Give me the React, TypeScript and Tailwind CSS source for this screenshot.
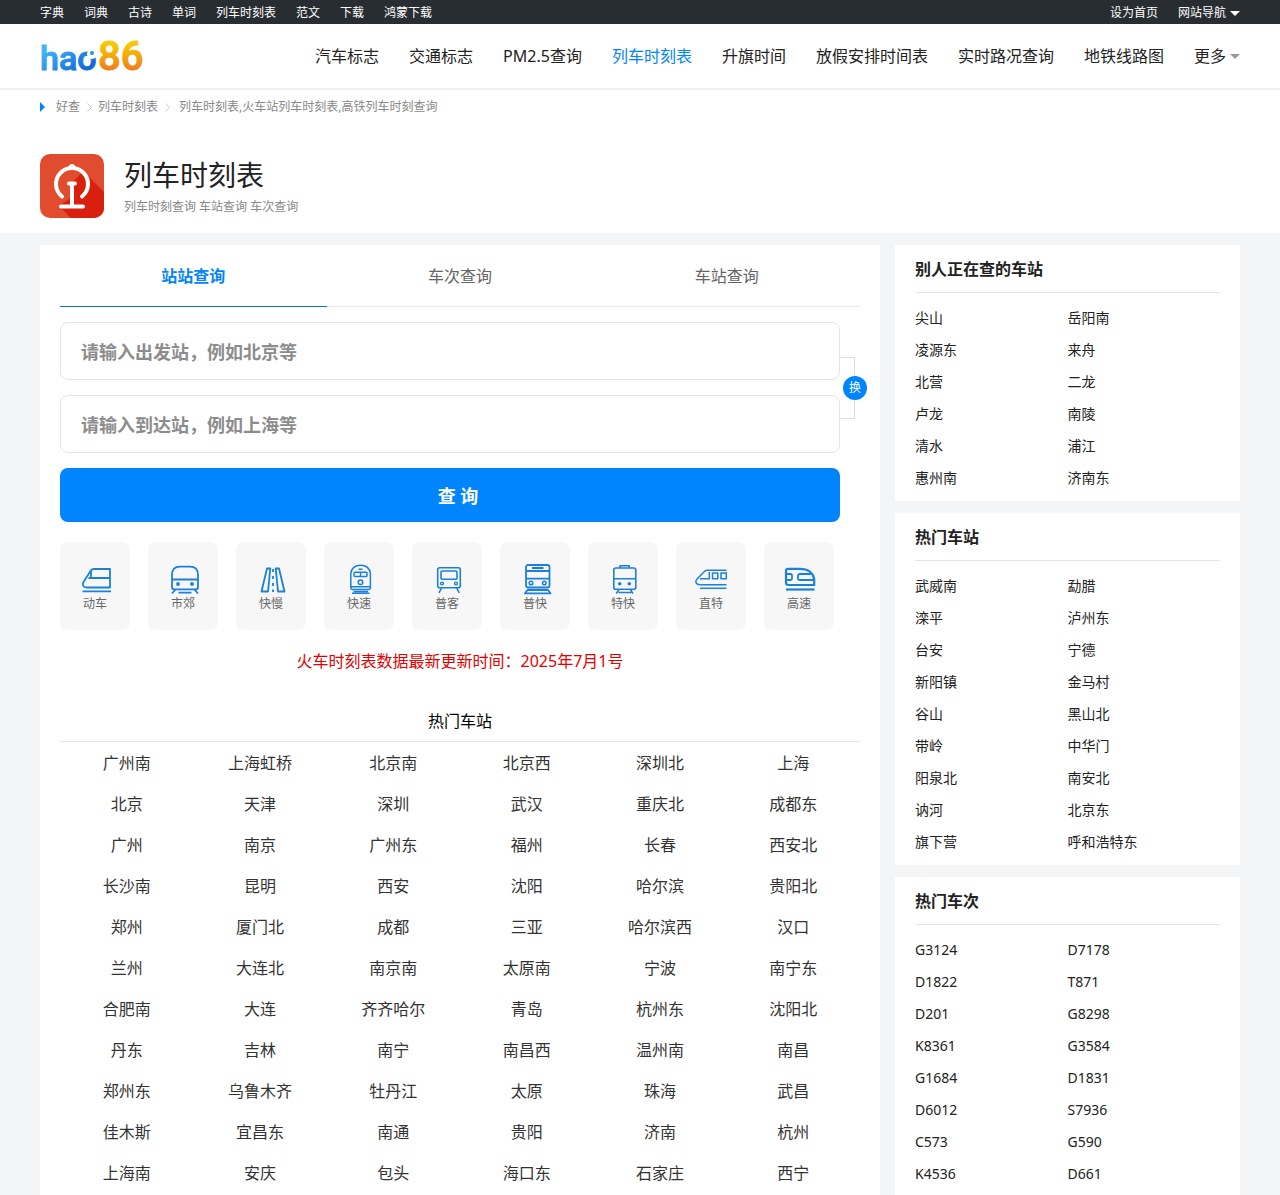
import { useState } from 'react';
import type { ReactNode } from 'react';

const topLinks = ['字典', '词典', '古诗', '单词', '列车时刻表', '范文', '下载', '鸿蒙下载'];

const navLinks = ['汽车标志', '交通标志', 'PM2.5查询', '列车时刻表', '升旗时间', '放假安排时间表', '实时路况查询', '地铁线路图'];

const tabs = ['站站查询', '车次查询', '车站查询'];

const hotStations = [
  '广州南', '上海虹桥', '北京南', '北京西', '深圳北', '上海',
  '北京', '天津', '深圳', '武汉', '重庆北', '成都东',
  '广州', '南京', '广州东', '福州', '长春', '西安北',
  '长沙南', '昆明', '西安', '沈阳', '哈尔滨', '贵阳北',
  '郑州', '厦门北', '成都', '三亚', '哈尔滨西', '汉口',
  '兰州', '大连北', '南京南', '太原南', '宁波', '南宁东',
  '合肥南', '大连', '齐齐哈尔', '青岛', '杭州东', '沈阳北',
  '丹东', '吉林', '南宁', '南昌西', '温州南', '南昌',
  '郑州东', '乌鲁木齐', '牡丹江', '太原', '珠海', '武昌',
  '佳木斯', '宜昌东', '南通', '贵阳', '济南', '杭州',
  '上海南', '安庆', '包头', '海口东', '石家庄', '西宁',
];

const sideLists = [
  {
    title: '别人正在查的车站',
    items: ['尖山', '岳阳南', '凌源东', '来舟', '北营', '二龙', '卢龙', '南陵', '清水', '浦江', '惠州南', '济南东'],
  },
  {
    title: '热门车站',
    items: [
      '武威南', '勐腊', '滦平', '泸州东', '台安', '宁德', '新阳镇', '金马村', '谷山', '黑山北',
      '带岭', '中华门', '阳泉北', '南安北', '讷河', '北京东', '旗下营', '呼和浩特东',
    ],
  },
  {
    title: '热门车次',
    items: [
      'G3124', 'D7178', 'D1822', 'T871', 'D201', 'G8298', 'K8361', 'G3584',
      'G1684', 'D1831', 'D6012', 'S7936', 'C573', 'G590', 'K4536', 'D661',
    ],
  },
];

const trainTypes: { name: string; icon: ReactNode }[] = [
  {
    name: '动车',
    icon: (
      <>
        <path d="M31 5H15c-1.500 0-2.500.5-3.300 1.700L4.500 18c-1.800 3 0 5.500 3 5.500H31z" />
        <path d="M12 6v8M9.500 14H31M3.500 27.300H32" />
      </>
    ),
  },
  {
    name: '市郊',
    icon: (
      <>
        <path d="M5 23V11c0-5.500 3-8.300 8-8.300h10c5 0 8 2.800 8 8.300v12c0 1.500-1 2.300-2.300 2.300H7.300C6 25.300 5 24.500 5 23zM5 15.500h26" />
        <path d="M8.500 25.500L5 29.500M27.500 25.500l3.500 4M11.500 28.700h13" />
        <circle cx="11" cy="20" r="1" />
        <circle cx="25" cy="20" r="1" />
      </>
    ),
  },
  {
    name: '快慢',
    icon: (
      <>
        <path d="M12 4.500h3.300L13 27.500H6.500zM20.700 4.500H24l5.500 23H23z" />
        <path d="M18 5v3M18 12v3M18 19v3M18 25.500v2.500" />
      </>
    ),
  },
  {
    name: '快速',
    icon: (
      <>
        <path d="M7.800 24V9.500C8.500 4 12 1.200 17.600 1.200S26.700 4 27.400 9.500V24c0 .8-.6 1.400-1.400 1.400H9.200c-.8 0-1.400-.6-1.400-1.400zM8 22.800h19" strokeWidth="1.500" />
        <rect x="11" y="8.300" width="13" height="4.200" rx="1" strokeWidth="1.500" />
        <path d="M17.500 8.500v4M15.500 5.200h4" strokeWidth="1.500" />
        <circle cx="17.500" cy="18.300" r="2.300" strokeWidth="1.500" />
        <path d="M10.500 27.500h14.500M9 29.300h17.500" strokeWidth="1.500" />
      </>
    ),
  },
  {
    name: '普客',
    icon: (
      <>
        <rect x="6.700" y="3.700" width="22.600" height="20" rx="2" strokeWidth="1.600" />
        <rect x="10" y="7" width="16" height="8.300" rx="1" strokeWidth="1.600" />
        <circle cx="11" cy="19.500" r="1.400" strokeWidth="1.400" />
        <circle cx="25" cy="19.500" r="1.400" strokeWidth="1.400" />
        <path d="M10.500 24L8 28.800M25.700 24l2.500 4.800" strokeWidth="1.600" />
      </>
    ),
  },
  {
    name: '普快',
    icon: (
      <>
        <rect x="7" y="1" width="23.500" height="22.500" rx="2" />
        <path d="M7 7h23.500M7 14.700h23.500M13 4h11.500" />
        <circle cx="12" cy="19" r="1.800" strokeWidth="1.500" />
        <circle cx="25.300" cy="19" r="1.800" strokeWidth="1.500" />
        <path d="M8.500 26h20.500l2.500 3.300H6z" />
      </>
    ),
  },
  {
    name: '特快',
    icon: (
      <>
        <rect x="6.800" y="4" width="22" height="21.300" rx="2" strokeWidth="1.600" />
        <path d="M13 4V1.800h9.300V4M7 14.700h21.500" strokeWidth="1.600" />
        <circle cx="12.700" cy="19.700" r=".9" />
        <circle cx="22.300" cy="19.700" r=".9" />
        <path d="M12 25.500l-2.700 4M23.300 25.500l2.700 4M11.500 28.500h12.500" strokeWidth="1.600" />
      </>
    ),
  },
  {
    name: '直特',
    icon: (
      <>
        <path d="M31.500 6.300H12.500c-1.200 0-2 .3-2.800 1L2 15c-2.500 2.800-.8 5.700 3 5.700h26.500M5 14.700h9.300V8" strokeWidth="1.500" />
        <rect x="17.500" y="9" width="5.300" height="5.700" strokeWidth="1.500" />
        <rect x="26" y="9" width="5.300" height="5.700" strokeWidth="1.500" />
        <path d="M5 24.300h26.500" strokeWidth="1.500" />
      </>
    ),
  },
  {
    name: '高速',
    icon: (
      <>
        <path d="M3 18.500V7c0-1.400.8-2.200 2.200-2.200h12C24.500 4.800 30 8.500 31.200 15v6H5.200C3.800 21 3 20 3 18.500z" strokeWidth="2.200" />
        <path d="M3 10h4.500c1 0 1.500.5 1.500 1.500v3c0 1-.5 1.500-1.500 1.500H3M28 10H17c-1.200 0-2 .7-2 1.800v2.400c0 1.100.8 1.800 2 1.800h14" />
        <path d="M3 25.500h28.500" strokeWidth="2.200" />
      </>
    ),
  },
];

function Logo() {
  return (
    <svg className="h-16 w-[106px]" viewBox="0 0 106 64" role="img" aria-label="hao86">
      <defs>
        <linearGradient id="logo-blue" x1="0" y1="0" x2="1" y2="1">
          <stop offset="0.200" stopColor="#3fb4f5" />
          <stop offset="0.800" stopColor="#1268d8" />
        </linearGradient>
        <linearGradient id="logo-orange" x1="0" y1="0" x2="0" y2="1">
          <stop offset="0.250" stopColor="#f5c800" />
          <stop offset="0.800" stopColor="#f07a1a" />
        </linearGradient>
      </defs>
      <text x="0" y="46" fontFamily="Roboto" fontSize="34" fontWeight="500" fill="url(#logo-blue)" stroke="url(#logo-blue)" strokeLinejoin="round">
        hao
      </text>
      <circle cx="52" cy="30" r="5" fill="#fff" />
      <circle cx="52" cy="29" r="2" fill="#2f8ee8" />
      <text x="58" y="46" fontFamily="Roboto" fontSize="40" fontWeight="500" fill="url(#logo-orange)" stroke="url(#logo-orange)" strokeLinejoin="round">
        86
      </text>
    </svg>
  );
}

function RailwayIcon() {
  return (
    <svg className="size-16 rounded-[10px]" viewBox="0 0 64 64" fill="none" aria-hidden="true">
      <rect width="64" height="64" fill="#e24c2e" />
      <path d="M43 17L64 38v26H31L19 52l13-9V29z" fill="#d9200f" />
      <path d="M22 42.500A16 16 0 1 1 42 42.500" stroke="#fff" strokeWidth="4" strokeLinecap="round" />
      <circle cx="32" cy="13" r="3" fill="#fff" />
      <path d="M29 29.500h6M32 30v22M21 52.500h22" stroke="#fff" strokeWidth="4" strokeLinecap="round" />
    </svg>
  );
}

function Caret({ className }: { className: string }) {
  return (
    <svg className={className} width="10" height="5" viewBox="0 0 10 5" fill="currentColor" aria-hidden="true">
      <path d="M0 0h10L5 5z" />
    </svg>
  );
}

function Chevron() {
  return (
    <svg className="mr-1.5 ml-[7px]" width="5" height="9" viewBox="0 0 5 9" fill="none" stroke="#ccc" aria-hidden="true">
      <path d="M.5.5l4 4-4 4" />
    </svg>
  );
}

function SideCard({ title, items }: { title: string; items: string[] }) {
  return (
    <section className="bg-white px-5 last:flex-1">
      <h2 className="h-12 border-b border-[#e5e5e5] text-base leading-[48px] font-bold text-[#222]">{title}</h2>
      <ul className="grid grid-cols-2 pt-[9px] pb-[7px] text-sm leading-8 text-[#222]">
        {items.map((item) => (
          <li key={item}>
            <a href="#">{item}</a>
          </li>
        ))}
      </ul>
    </section>
  );
}

export default function App() {
  const [activeTab, setActiveTab] = useState(0);
  const [from, setFrom] = useState('');
  const [to, setTo] = useState('');

  const swap = () => {
    setFrom(to);
    setTo(from);
  };

  return (
    <div className="min-h-screen bg-[#f3f5f7] font-['Noto_Sans','Noto_Sans_CJK_SC',sans-serif] text-[#222]">
      <div className="h-6 bg-[#282d31] text-xs leading-[26px] text-white">
        <div className="mx-auto flex max-w-[1200px] justify-between">
          <ul className="flex gap-5">
            {topLinks.map((link) => (
              <li key={link}>
                <a href="#">{link}</a>
              </li>
            ))}
          </ul>
          <div className="flex gap-5">
            <a href="#">设为首页</a>
            <a href="#" className="flex items-center gap-1">
              网站导航
              <Caret className="text-white" />
            </a>
          </div>
        </div>
      </div>

      <header className="border-b-2 border-[#f0f0f0] bg-white">
        <div className="mx-auto flex h-16 max-w-[1200px] items-center justify-between">
          <a href="#">
            <Logo />
          </a>
          <nav className="flex gap-[30px] text-base leading-[66px]">
            {navLinks.map((link) => (
              <a key={link} href="#" className={link === '列车时刻表' ? 'text-[#0085ff]' : ''}>
                {link}
              </a>
            ))}
            <a href="#" className="flex items-center gap-1">
              更多
              <Caret className="text-[#999]" />
            </a>
          </nav>
        </div>
      </header>

      <div className="bg-white pb-[15px]">
        <div className="mx-auto max-w-[1200px]">
          <div className="flex h-[34px] items-center text-xs text-[#888]">
            <svg className="mr-[11px]" width="5" height="10" viewBox="0 0 5 10" fill="#0085ff" aria-hidden="true">
              <path d="M0 0l5 5-5 5z" />
            </svg>
            <a href="#">好查</a>
            <Chevron />
            <a href="#">列车时刻表</a>
            <Chevron />
            <span className="ml-[3px]">列车时刻表,火车站列车时刻表,高铁列车时刻查询</span>
          </div>
          <div className="mt-[30px] flex items-center gap-5">
            <RailwayIcon />
            <div>
              <h1 className="text-[28px] leading-[42px]">列车时刻表</h1>
              <p className="text-xs leading-[22px] text-[#888]">列车时刻查询 车站查询 车次查询</p>
            </div>
          </div>
        </div>
      </div>

      <div className="mx-auto mt-3 flex max-w-[1200px] gap-[15px]">
        <main className="flex-1 bg-white px-5">
          <div className="grid grid-cols-3" role="tablist">
            {tabs.map((tab, i) => (
              <button
                key={tab}
                type="button"
                role="tab"
                aria-selected={i === activeTab}
                onClick={() => setActiveTab(i)}
                className={
                  i === activeTab
                    ? 'h-[62px] border-b border-[#0078e8] text-base font-bold text-[#0085ff]'
                    : 'h-[62px] border-b border-[#e8e8e8] text-base text-[#666]'
                }
              >
                {tab}
              </button>
            ))}
          </div>

          <form className="mt-[15px]" onSubmit={(e) => e.preventDefault()}>
            <div className="flex items-center">
              <div className="flex flex-1 flex-col gap-[15px]">
                <input
                  aria-label="出发站"
                  value={from}
                  onChange={(e) => setFrom(e.target.value)}
                  placeholder="请输入出发站，例如北京等"
                  className="h-[58px] w-full rounded-lg border border-[#e3e3e3] px-5 pt-0.5 text-lg font-bold outline-none placeholder:text-[#8c8c8c]"
                />
                <input
                  aria-label="到达站"
                  value={to}
                  onChange={(e) => setTo(e.target.value)}
                  placeholder="请输入到达站，例如上海等"
                  className="h-[58px] w-full rounded-lg border border-[#e3e3e3] px-5 pt-0.5 text-lg font-bold outline-none placeholder:text-[#8c8c8c]"
                />
              </div>
              <div className="relative mr-[5px] h-[62px] w-[15px] border-y border-r border-[#ddd]">
                <button
                  type="button"
                  onClick={swap}
                  className="absolute top-[18px] -right-[13px] size-6 rounded-full bg-[#0085ff] text-xs leading-6 text-white"
                >
                  换
                </button>
              </div>
            </div>
            <div className="mt-[15px] mr-5">
              <button type="submit" className="h-[54px] w-full rounded-lg bg-[#0085ff] pt-0.5 pl-4 text-lg font-bold text-white">
                查 询
              </button>
            </div>
          </form>

          <ul className="mt-5 flex gap-[18px]">
            {trainTypes.map(({ name, icon }) => (
              <li key={name}>
                <a href="#" className="flex h-[88px] w-[70px] flex-col items-center rounded-lg bg-[#f7f7f7] pt-[22px] text-xs leading-4 text-[#666]">
                  <svg className="size-8 overflow-visible" viewBox="0 0 32 32" fill="none" stroke="#1a80dc" strokeWidth="1.800" strokeLinejoin="round" aria-hidden="true">
                    {icon}
                  </svg>
                  {name}
                </a>
              </li>
            ))}
          </ul>

          <p className="mt-[15px] text-center text-base leading-8 text-[#e60000]">火车时刻表数据最新更新时间：2025年7月1号</p>

          <h2 className="mt-6 border-b border-[#e5e5e5] text-center text-base leading-10 text-black">热门车站</h2>
          <ul className="grid grid-cols-6 pt-px text-center text-base leading-[41px] text-[#333]">
            {hotStations.map((station) => (
              <li key={station}>
                <a href="#">{station}</a>
              </li>
            ))}
          </ul>
        </main>

        <aside className="flex w-[345px] flex-col gap-3">
          {sideLists.map((list) => (
            <SideCard key={list.title} title={list.title} items={list.items} />
          ))}
        </aside>
      </div>
    </div>
  );
}
